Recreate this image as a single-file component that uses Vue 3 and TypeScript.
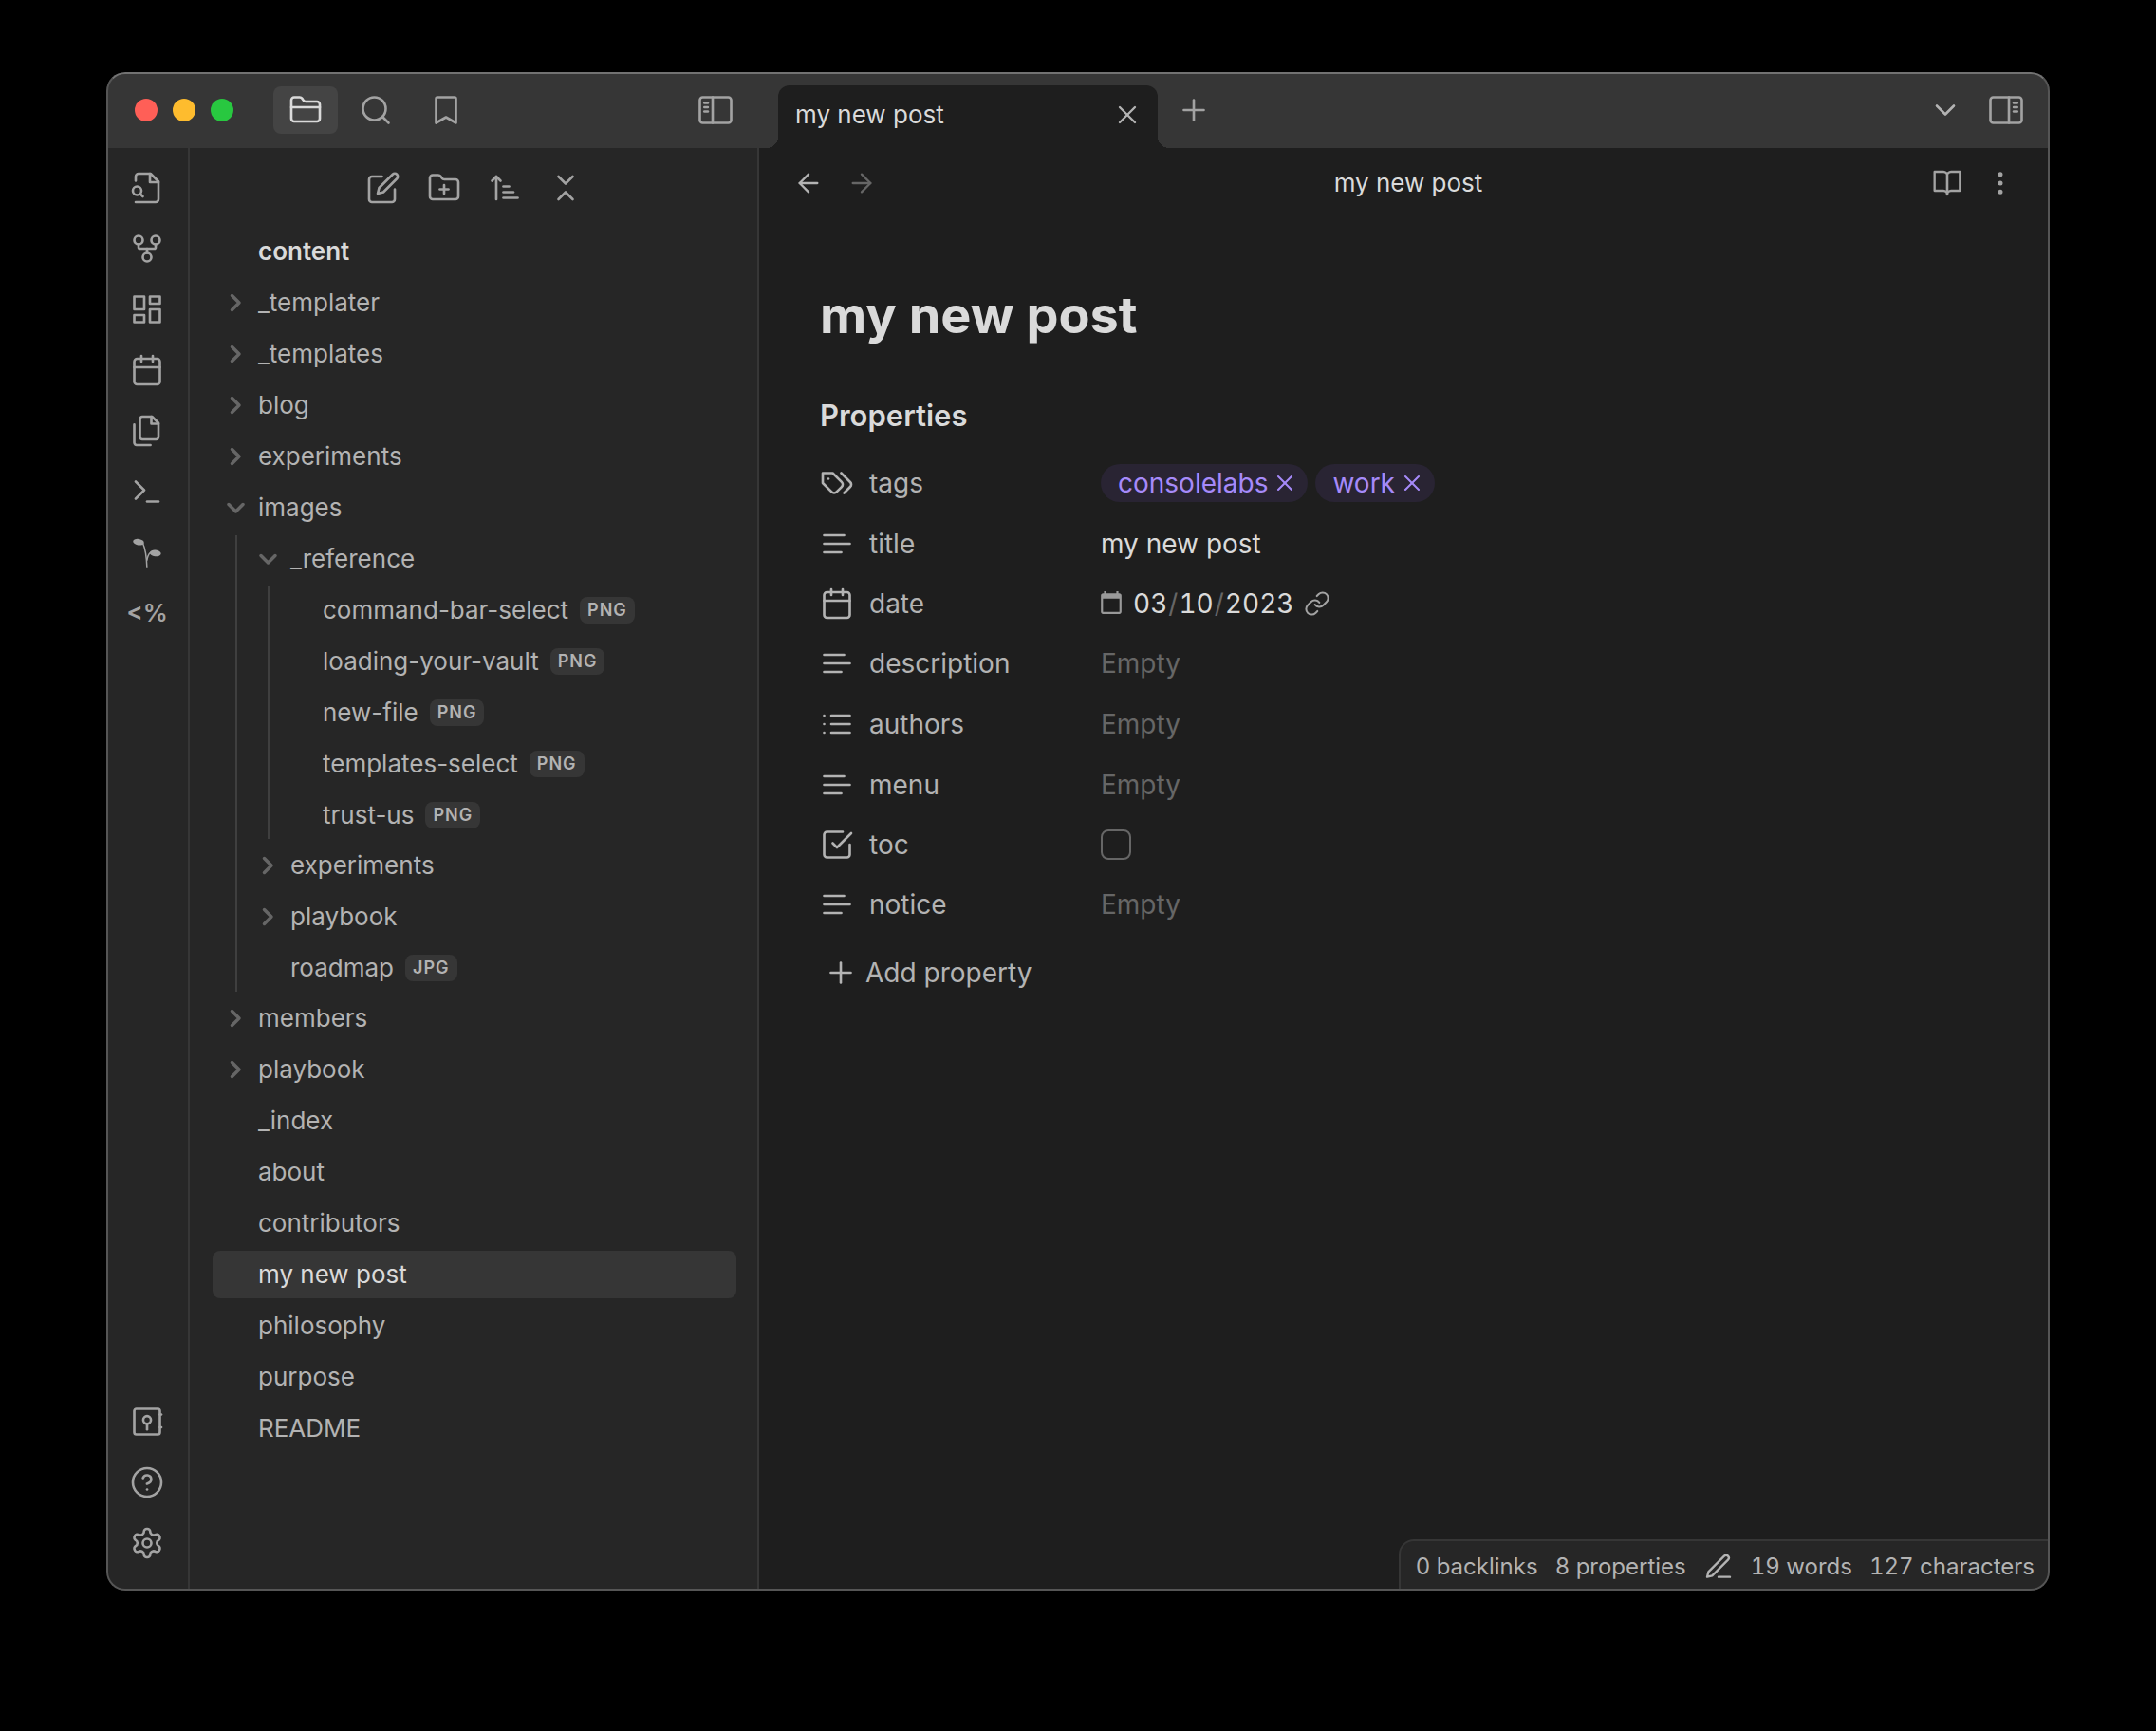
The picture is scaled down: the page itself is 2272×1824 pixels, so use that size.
<script setup lang="ts">
import { h, ref, type FunctionalComponent } from 'vue'

/* Stroke icons on a 24-unit grid, one list of paths per icon. */
const icons: Record<string, string[]> = {
  folder: ['M4 20h16a2 2 0 0 0 2-2V8a2 2 0 0 0-2-2h-7.93a2 2 0 0 1-1.66-.9l-.82-1.2A2 2 0 0 0 7.93 3H4a2 2 0 0 0-2 2v13c0 1.1.9 2 2 2Z', 'M2 10h20'],
  search: ['M3 11a8 8 0 1 0 16 0a8 8 0 1 0-16 0', 'm21 21-4.3-4.3'],
  bookmark: ['m19 21-7-4-7 4V4a1 1 0 0 1 1-1h12a1 1 0 0 1 1 1v17z'],
  sidebarLeft: ['M3 3h18a2 2 0 0 1 2 2v14a2 2 0 0 1-2 2H3a2 2 0 0 1-2-2V5a2 2 0 0 1 2-2z', 'M10 3v18', 'M4.2 7h2.4', 'M4.2 10h2.4', 'M4.2 13h2.4'],
  sidebarRight: ['M3 3h18a2 2 0 0 1 2 2v14a2 2 0 0 1-2 2H3a2 2 0 0 1-2-2V5a2 2 0 0 1 2-2z', 'M14 3v18', 'M17.4 7h2.4', 'M17.4 10h2.4', 'M17.4 13h2.4'],
  close: ['M18 6 6 18', 'm6 6 12 12'],
  plus: ['M5 12h14', 'M12 5v14'],
  chevron: ['m6 9 6 6 6-6'],
  fileSearch: ['M4 22h14a2 2 0 0 0 2-2V7.5L14.5 2H6a2 2 0 0 0-2 2v3', 'M14 2v6h6', 'M2 14a3 3 0 1 0 6 0a3 3 0 1 0-6 0', 'm9 18-1.5-1.5'],
  fork: ['M9 18a3 3 0 1 0 6 0a3 3 0 1 0-6 0', 'M3 6a3 3 0 1 0 6 0a3 3 0 1 0-6 0', 'M15 6a3 3 0 1 0 6 0a3 3 0 1 0-6 0', 'M18 9v2c0 .6-.4 1-1 1H7c-.6 0-1-.4-1-1V9', 'M12 12v3'],
  dashboard: ['M3 3h7v9H3z', 'M14 3h7v5h-7z', 'M14 12h7v9h-7z', 'M3 16h7v5H3z'],
  calendar: ['M5 4h14a2 2 0 0 1 2 2v14a2 2 0 0 1-2 2H5a2 2 0 0 1-2-2V6a2 2 0 0 1 2-2z', 'M16 2v4', 'M8 2v4', 'M3 10h18'],
  files: ['M15.5 2H8.6c-.4 0-.8.2-1.1.5-.3.3-.5.7-.5 1.1v12.8c0 .4.2.8.5 1.1.3.3.7.5 1.1.5h9.8c.4 0 .8-.2 1.1-.5.3-.3.5-.7.5-1.1V6.5L15.5 2z', 'M3 7.6v12.8c0 .4.2.8.5 1.1.3.3.7.5 1.1.5h9.8', 'M15 2v5h5'],
  terminal: ['m4 17 6-6-6-6', 'M12 19h8'],
  vault: ['M4.5 3h15A1.5 1.5 0 0 1 21 4.5v15a1.5 1.5 0 0 1-1.5 1.5h-15A1.5 1.5 0 0 1 3 19.5v-15A1.5 1.5 0 0 1 4.5 3z', 'M9.3 10.8a2.7 2.7 0 1 0 5.4 0a2.7 2.7 0 1 0-5.4 0', 'M12 13.5v4', 'M21 7h1', 'M21 16h1'],
  help: ['M2 12a10 10 0 1 0 20 0a10 10 0 1 0-20 0', 'M9.09 9a3 3 0 0 1 5.83 1c0 2-3 3-3 3', 'M12 17h.01'],
  settings: ['M12.22 2h-.44a2 2 0 0 0-2 2v.18a2 2 0 0 1-1 1.73l-.43.25a2 2 0 0 1-2 0l-.15-.08a2 2 0 0 0-2.73.73l-.22.38a2 2 0 0 0 .73 2.73l.15.1a2 2 0 0 1 1 1.72v.51a2 2 0 0 1-1 1.74l-.15.09a2 2 0 0 0-.73 2.73l.22.38a2 2 0 0 0 2.73.73l.15-.08a2 2 0 0 1 2 0l.43.25a2 2 0 0 1 1 1.73V20a2 2 0 0 0 2 2h.44a2 2 0 0 0 2-2v-.18a2 2 0 0 1 1-1.73l.43-.25a2 2 0 0 1 2 0l.15.08a2 2 0 0 0 2.73-.73l.22-.39a2 2 0 0 0-.73-2.73l-.15-.08a2 2 0 0 1-1-1.74v-.5a2 2 0 0 1 1-1.74l.15-.09a2 2 0 0 0 .73-2.73l-.22-.38a2 2 0 0 0-2.73-.73l-.15.08a2 2 0 0 1-2 0l-.43-.25a2 2 0 0 1-1-1.73V4a2 2 0 0 0-2-2z', 'M9 12a3 3 0 1 0 6 0a3 3 0 1 0-6 0'],
  edit: ['M11 4H4a2 2 0 0 0-2 2v14a2 2 0 0 0 2 2h14a2 2 0 0 0 2-2v-7', 'M18.5 2.5a2.121 2.121 0 0 1 3 3L12 15l-4 1 1-4 9.5-9.5z'],
  folderPlus: ['M4 20h16a2 2 0 0 0 2-2V8a2 2 0 0 0-2-2h-7.93a2 2 0 0 1-1.66-.9l-.82-1.2A2 2 0 0 0 7.93 3H4a2 2 0 0 0-2 2v13c0 1.1.9 2 2 2Z', 'M12 10v6', 'M9 13h6'],
  sort: ['m3 7 3-3 3 3', 'M6 4v16', 'M11 11h4', 'M11 15h7', 'M11 19h10'],
  collapse: ['m7 20 5-5 5 5', 'm7 4 5 5 5-5'],
  back: ['m12 19-7-7 7-7', 'M19 12H5'],
  forward: ['M5 12h14', 'm12 5 7 7-7 7'],
  book: ['M2 3h7a3 3 0 0 1 3 3v15a3 3 0 0 0-3-3H2z', 'M22 3h-7a3 3 0 0 0-3 3v15a3 3 0 0 1 3-3h7z'],
  more: ['M11 5a1 1 0 1 0 2 0a1 1 0 1 0-2 0', 'M11 12a1 1 0 1 0 2 0a1 1 0 1 0-2 0', 'M11 19a1 1 0 1 0 2 0a1 1 0 1 0-2 0'],
  tags: ['M9 5H2v7l6.29 6.29c.94.94 2.48.94 3.42 0l3.58-3.58c.94-.94.94-2.48 0-3.42L9 5Z', 'M6 9.01V9', 'm15 5 6.3 6.3a2.4 2.4 0 0 1 0 3.4L17 19'],
  text: ['M17 6H3', 'M21 12H3', 'M15 18H3'],
  list: ['M8 6h13', 'M8 12h13', 'M8 18h13', 'M3 6h.01', 'M3 12h.01', 'M3 18h.01'],
  check: ['m9 11 3 3L22 4', 'M21 12v7a2 2 0 0 1-2 2H5a2 2 0 0 1-2-2V5a2 2 0 0 1 2-2h11'],
  link: ['M10 13a5 5 0 0 0 7.54.54l3-3a5 5 0 0 0-7.07-7.07l-1.72 1.71', 'M14 11a5 5 0 0 0-7.54-.54l-3 3a5 5 0 0 0 7.07 7.07l1.71-1.71'],
  pencil: ['M12 20h9', 'M16.5 3.5a2.12 2.12 0 0 1 3 3L7 19l-4 1 1-4Z'],
  twistClosed: ['m8.5 4.5 7.5 7.5-7.5 7.5'],
  twistOpen: ['m5 8.5 7.5 7.5L20 8.5'],
}

const Icon: FunctionalComponent<{ name: string; size?: number }> = (props) =>
  h(
    'svg',
    {
      class: 'icon',
      width: props.size ?? 36,
      height: props.size ?? 36,
      viewBox: '0 0 24 24',
      'aria-hidden': 'true',
    },
    icons[props.name].map((d) => h('path', { d })),
  )
Icon.props = ['name', 'size']

interface TreeNode {
  name: string
  kind: 'folder' | 'file'
  open?: boolean
  ext?: string
  children?: TreeNode[]
}

const folder = (name: string, children?: TreeNode[]): TreeNode => ({ name, kind: 'folder', open: !!children, children })
const file = (name: string, ext?: string): TreeNode => ({ name, kind: 'file', ext })

const tree: TreeNode[] = [
  folder('_templater'),
  folder('_templates'),
  folder('blog'),
  folder('experiments'),
  folder('images', [
    folder('_reference', [
      file('command-bar-select', 'PNG'),
      file('loading-your-vault', 'PNG'),
      file('new-file', 'PNG'),
      file('templates-select', 'PNG'),
      file('trust-us', 'PNG'),
    ]),
    folder('experiments'),
    folder('playbook'),
    file('roadmap', 'JPG'),
  ]),
  folder('members'),
  folder('playbook'),
  file('_index'),
  file('about'),
  file('contributors'),
  file('my new post'),
  file('philosophy'),
  file('purpose'),
  file('README'),
]

const active = ref('my new post')

const renderNodes = (nodes: TreeNode[]): ReturnType<typeof h> =>
  h(
    'ul',
    { class: 'tree-list' },
    nodes.map((node) =>
      h('li', { class: 'tree-item' }, [
        h(
          'button',
          {
            type: 'button',
            class: ['tree-row', { active: node.kind === 'file' && node.name === active.value }],
            'aria-expanded': node.kind === 'folder' ? !!node.open : undefined,
            onClick: () => {
              if (node.kind === 'file') active.value = node.name
            },
          },
          [
            h('span', { class: 'twist' }, node.kind === 'folder' ? [h(Icon, { name: node.open ? 'twistOpen' : 'twistClosed', size: 24 })] : []),
            h('span', { class: 'tree-name' }, node.name),
            node.ext ? h('span', { class: 'ext' }, node.ext) : null,
          ],
        ),
        node.children ? renderNodes(node.children) : null,
      ]),
    ),
  )
const FileTree: FunctionalComponent = () => renderNodes(tree)

const sideTabs = [
  { icon: 'folder', label: 'Files' },
  { icon: 'search', label: 'Search' },
  { icon: 'bookmark', label: 'Bookmarks' },
]
const ribbonTop = [
  { icon: 'fileSearch', label: 'Open quick switcher' },
  { icon: 'fork', label: 'Open graph view' },
  { icon: 'dashboard', label: 'Create new canvas' },
  { icon: 'calendar', label: "Open today's daily note" },
  { icon: 'files', label: 'Insert template' },
  { icon: 'terminal', label: 'Open command palette' },
]
const ribbonBottom = [
  { icon: 'vault', label: 'Open another vault' },
  { icon: 'help', label: 'Help' },
  { icon: 'settings', label: 'Settings' },
]
const navActions = [
  { icon: 'edit', label: 'New note' },
  { icon: 'folderPlus', label: 'New folder' },
  { icon: 'sort', label: 'Change sort order' },
  { icon: 'collapse', label: 'Collapse all' },
]

interface Property {
  key: string
  icon: string
  type: 'tags' | 'text' | 'date' | 'check'
}
const properties: Property[] = [
  { key: 'tags', icon: 'tags', type: 'tags' },
  { key: 'title', icon: 'text', type: 'text' },
  { key: 'date', icon: 'calendar', type: 'date' },
  { key: 'description', icon: 'text', type: 'text' },
  { key: 'authors', icon: 'list', type: 'text' },
  { key: 'menu', icon: 'text', type: 'text' },
  { key: 'toc', icon: 'check', type: 'check' },
  { key: 'notice', icon: 'text', type: 'text' },
]
const tags = ref(['consolelabs', 'work'])
const values = ref<Record<string, string>>({ title: 'my new post', date: '2023-03-10', description: '', authors: '', menu: '', notice: '' })
const toc = ref(false)
</script>

<template>
  <div class="desktop">
    <div class="window">
      <header class="titlebar">
        <div class="titlebar-side">
          <div class="lights">
            <button type="button" class="light red" aria-label="Close window"></button>
            <button type="button" class="light yellow" aria-label="Minimise window"></button>
            <button type="button" class="light green" aria-label="Zoom window"></button>
          </div>
          <div class="side-tabs">
            <button v-for="(t, i) in sideTabs" :key="t.icon" type="button" class="side-tab" :class="{ active: i === 0 }" :aria-label="t.label">
              <Icon :name="t.icon" />
            </button>
          </div>
          <button type="button" class="icon-button" aria-label="Collapse left sidebar"><Icon name="sidebarLeft" /></button>
        </div>
        <div class="titlebar-main">
          <div class="tab">
            <span class="tab-title">my new post</span>
            <button type="button" class="icon-button bright" aria-label="Close tab"><Icon name="close" :size="32" /></button>
          </div>
          <button type="button" class="icon-button new-tab" aria-label="New tab"><Icon name="plus" /></button>
          <div class="titlebar-end">
            <button type="button" class="icon-button bright" aria-label="Tab list"><Icon name="chevron" /></button>
            <button type="button" class="icon-button" aria-label="Expand right sidebar"><Icon name="sidebarRight" /></button>
          </div>
        </div>
      </header>

      <div class="workspace">
        <nav class="ribbon" aria-label="Ribbon">
          <div class="ribbon-group">
            <button v-for="r in ribbonTop" :key="r.icon" type="button" class="icon-button" :aria-label="r.label"><Icon :name="r.icon" /></button>
            <button type="button" class="icon-button" aria-label="Digital garden">
              <svg class="sprout" width="36" height="36" viewBox="0 0 24 24" aria-hidden="true">
                <ellipse cx="6" cy="4.8" rx="3.9" ry="2.2" transform="rotate(10 6 4.8)" />
                <ellipse cx="17.8" cy="12.6" rx="4" ry="2.2" transform="rotate(6 17.8 12.6)" />
                <path d="M9 5.5c1.8 4 2.6 9 2.9 17" />
                <path d="M14.2 12.3c-1.3 1.2-2 3-2.3 5.5" />
              </svg>
            </button>
            <button type="button" class="icon-button templater" aria-label="Templater">&lt;%</button>
          </div>
          <div class="ribbon-group">
            <button v-for="r in ribbonBottom" :key="r.icon" type="button" class="icon-button" :aria-label="r.label"><Icon :name="r.icon" /></button>
          </div>
        </nav>

        <aside class="sidebar">
          <div class="nav-actions">
            <button v-for="a in navActions" :key="a.icon" type="button" class="icon-button" :aria-label="a.label"><Icon :name="a.icon" /></button>
          </div>
          <div class="tree">
            <div class="vault-name">content</div>
            <FileTree />
          </div>
        </aside>

        <main class="view">
          <div class="view-header">
            <div class="history">
              <button type="button" class="icon-button bright" aria-label="Back"><Icon name="back" :size="32" /></button>
              <button type="button" class="icon-button faint" aria-label="Forward"><Icon name="forward" :size="32" /></button>
            </div>
            <div class="view-title">my new post</div>
            <div class="history">
              <button type="button" class="icon-button" aria-label="Reading view"><Icon name="book" :size="32" /></button>
              <button type="button" class="icon-button more" aria-label="More options"><Icon name="more" :size="32" /></button>
            </div>
          </div>

          <article class="note">
            <h1>my new post</h1>
            <h2>Properties</h2>
            <div class="properties">
              <div v-for="p in properties" :key="p.key" class="property" :class="p.type">
                <label class="property-key" :for="'property-' + p.key">
                  <Icon :name="p.icon" />
                  <span>{{ p.key }}</span>
                </label>
                <div class="property-value">
                  <template v-if="p.type === 'tags'">
                    <span v-for="t in tags" :key="t" class="pill">
                      {{ t }}
                      <button type="button" class="pill-remove" :aria-label="'Remove ' + t" @click="tags = tags.filter((x) => x !== t)">
                        <Icon name="close" :size="28" />
                      </button>
                    </span>
                    <input id="property-tags" type="text" class="text-input" />
                  </template>
                  <template v-else-if="p.type === 'date'">
                    <input :id="'property-' + p.key" v-model="values[p.key]" type="date" class="date-input" />
                    <button type="button" class="icon-button" aria-label="Open daily note"><Icon name="link" :size="28" /></button>
                  </template>
                  <input v-else-if="p.type === 'check'" :id="'property-' + p.key" v-model="toc" type="checkbox" class="check-input" />
                  <input v-else :id="'property-' + p.key" v-model="values[p.key]" type="text" placeholder="Empty" class="text-input" />
                </div>
              </div>
            </div>
            <button type="button" class="add-property"><Icon name="plus" />Add property</button>
          </article>

          <footer class="status">
            <span>0 backlinks</span>
            <span>8 properties</span>
            <Icon name="pencil" :size="32" />
            <span>19 words</span>
            <span>127 characters</span>
          </footer>
        </main>
      </div>
    </div>
  </div>
</template>

<style>
body {
  margin: 0;
  background: #000;
}
</style>

<style scoped>
.desktop {
  box-sizing: border-box;
  min-height: 100vh;
  padding: 76px 112px 148px;
  display: flex;
  background: #000;
  color: #dadada;
  font-family: Inter, "Liberation Sans", sans-serif;
  font-size: 26px;
  line-height: 34px;
}
.desktop :deep(*) {
  box-sizing: border-box;
}
.desktop :deep(button),
.desktop :deep(input) {
  margin: 0;
  padding: 0;
  border: 0;
  background: none;
  color: inherit;
  font: inherit;
}
.window {
  position: relative;
  flex: 1;
  min-width: 0;
  display: flex;
  flex-direction: column;
  border-radius: 20px;
  overflow: hidden;
  background: #1e1e1e;
}
.window::after {
  content: "";
  position: absolute;
  inset: 0;
  border: 2px solid #555;
  border-top-color: #727272;
  border-radius: 20px;
  pointer-events: none;
}
.desktop :deep(.icon) {
  display: block;
  flex: none;
  fill: none;
  stroke: currentColor;
  stroke-width: 1.75;
  stroke-linecap: round;
  stroke-linejoin: round;
}
.desktop .icon-button {
  display: flex;
  align-items: center;
  justify-content: center;
  color: #a3a3a3;
}
.desktop .icon-button.bright {
  color: #b3b3b3;
}
.desktop .icon-button.faint {
  color: #666;
}
.more :deep(.icon) {
  fill: currentColor;
}

/* Title bar */
.titlebar {
  display: flex;
  height: 80px;
  background: #363636;
}
.titlebar-side {
  flex: none;
  width: 688px;
  padding: 0 28px 0 30px;
  display: flex;
  align-items: center;
}
.lights {
  display: flex;
  gap: 16px;
}
.lights .light {
  width: 24px;
  height: 24px;
  border-radius: 50%;
}
.lights .red {
  background: #ff5f57;
}
.lights .yellow {
  background: #febc2e;
}
.lights .green {
  background: #28c840;
}
.side-tabs {
  flex: 1;
  display: flex;
  gap: 6px;
  margin-left: 42px;
}
.side-tabs .side-tab {
  width: 68px;
  height: 50px;
  display: flex;
  align-items: center;
  justify-content: center;
  border-radius: 8px;
  color: #a3a3a3;
}
.side-tabs .side-tab.active {
  background: #444;
  color: #dadada;
}
.titlebar-main {
  flex: 1;
  min-width: 0;
  display: flex;
  align-items: center;
  padding: 0 28px 0 20px;
}
.tab {
  position: relative;
  align-self: flex-end;
  width: 400px;
  height: 66px;
  padding: 0 16px 4px 18px;
  display: flex;
  align-items: center;
  justify-content: space-between;
  border-radius: 12px 12px 0 0;
  background: #1e1e1e;
}
.tab::before,
.tab::after {
  content: "";
  position: absolute;
  bottom: 0;
  width: 12px;
  height: 12px;
}
.tab::before {
  right: 100%;
  background: radial-gradient(circle at 0 0, transparent 12px, #1e1e1e 12px);
}
.tab::after {
  left: 100%;
  background: radial-gradient(circle at 100% 0, transparent 12px, #1e1e1e 12px);
}
.titlebar .new-tab {
  margin-left: 20px;
}
.titlebar-end {
  margin-left: auto;
  display: flex;
  gap: 28px;
}

/* Ribbon */
.workspace {
  flex: 1;
  display: flex;
}
.ribbon {
  flex: none;
  width: 88px;
  padding: 24px 0 32px;
  display: flex;
  flex-direction: column;
  justify-content: space-between;
  border-right: 2px solid #363636;
  background: #262626;
}
.ribbon-group {
  display: flex;
  flex-direction: column;
  align-items: center;
  gap: 28px;
}
.ribbon-group .icon-button {
  height: 36px;
}
.ribbon-group .templater {
  font-size: 26px;
  font-weight: 600;
}
.sprout {
  fill: currentColor;
}
.sprout path {
  fill: none;
  stroke: currentColor;
  stroke-width: 1;
}

/* File explorer */
.sidebar {
  flex: none;
  width: 600px;
  border-right: 2px solid #363636;
  background: #262626;
}
.nav-actions {
  height: 84px;
  padding-left: 2px;
  display: flex;
  align-items: center;
  justify-content: center;
  gap: 28px;
}
.tree {
  padding: 0 22px 24px 24px;
}
.vault-name {
  padding: 8px 48px;
  margin-bottom: 4px;
  font-weight: 600;
}
.tree :deep(.tree-list) {
  margin: 0;
  padding: 0;
  list-style: none;
}
.tree :deep(.tree-list .tree-list) {
  margin: 0 0 3px 24px;
  padding-left: 8px;
  border-left: 2px solid #3f3f3f;
}
.tree :deep(.tree-row) {
  width: 100%;
  height: 50px;
  margin-bottom: 4px;
  padding-left: 12px;
  display: flex;
  align-items: center;
  border-radius: 8px;
  color: #b3b3b3;
  text-align: left;
}
.tree :deep(.tree-list .tree-item:last-child > .tree-row) {
  margin-bottom: 0;
}
.tree :deep(.tree-row.active) {
  background: #363636;
  color: #dadada;
}
.tree :deep(.twist) {
  width: 24px;
  height: 24px;
  margin-right: 12px;
  color: #666;
}
.tree :deep(.twist .icon) {
  stroke-width: 3.5;
}
.tree :deep(.ext) {
  height: 28px;
  margin-left: 12px;
  padding: 0 8px;
  border-radius: 8px;
  background: #363636;
  font-size: 18px;
  font-weight: 600;
  line-height: 28px;
  letter-spacing: 1px;
}

/* Note */
.view {
  flex: 1;
  min-width: 0;
  display: flex;
  flex-direction: column;
}
.view-header {
  height: 74px;
  padding: 0 36px;
  display: flex;
  align-items: center;
}
.history {
  display: flex;
  gap: 24px;
}
.view-title {
  flex: 1;
  padding-left: 8px;
  text-align: center;
}
.note {
  flex: 1;
  padding: 66px 64px 40px;
  font-size: 28px;
}
.note h1 {
  margin: 0 0 50px;
  font-size: 54px;
  font-weight: 700;
  line-height: 72px;
}
.note h2 {
  margin: 0 0 19px;
  font-size: 31px;
  font-weight: 600;
  line-height: 40px;
}
.property {
  height: 64px;
  display: flex;
  align-items: center;
}
.property.date,
.property.check {
  height: 62px;
}
.property-key {
  flex: none;
  width: 296px;
  display: flex;
  align-items: center;
  gap: 16px;
  color: #b3b3b3;
}
.property-value {
  flex: 1;
  min-width: 0;
  display: flex;
  align-items: center;
  gap: 10px;
}
.property.tags .property-value {
  gap: 8px;
}
.property-value .text-input {
  flex: 1;
  min-width: 0;
  height: 40px;
  outline: 0;
}
.text-input::placeholder {
  color: #666;
  opacity: 1;
}
.pill {
  height: 40px;
  padding: 0 10px 0 18px;
  display: flex;
  align-items: center;
  gap: 4px;
  border-radius: 20px;
  background: #292433;
  color: #a68af9;
}
.property-value .date-input {
  width: 204px;
  display: flex;
  color-scheme: dark;
  font-variant-numeric: tabular-nums;
}
.date-input::-webkit-calendar-picker-indicator {
  order: -1;
  width: 28px;
  height: 28px;
  margin: 0 8px 0 -3px;
  padding: 0;
  opacity: 0.55;
}
.date-input::-webkit-datetime-edit-text {
  color: #666;
}
.property-value .check-input {
  appearance: none;
  width: 32px;
  height: 32px;
  border: 2px solid #666;
  border-radius: 8px;
}
.check-input:checked {
  background: #8a5cf5;
}
.note .add-property {
  margin: 20px 0 0 4px;
  height: 40px;
  display: flex;
  align-items: center;
  gap: 8px;
  color: #b3b3b3;
}

/* Status bar */
.status {
  align-self: flex-end;
  height: 54px;
  padding: 2px 16px 0;
  display: flex;
  align-items: center;
  gap: 18px;
  border: solid #363636;
  border-width: 2px 0 0 2px;
  border-top-left-radius: 16px;
  background: #262626;
  color: #b3b3b3;
  font-size: 24px;
  font-variant-numeric: tabular-nums;
}
</style>
